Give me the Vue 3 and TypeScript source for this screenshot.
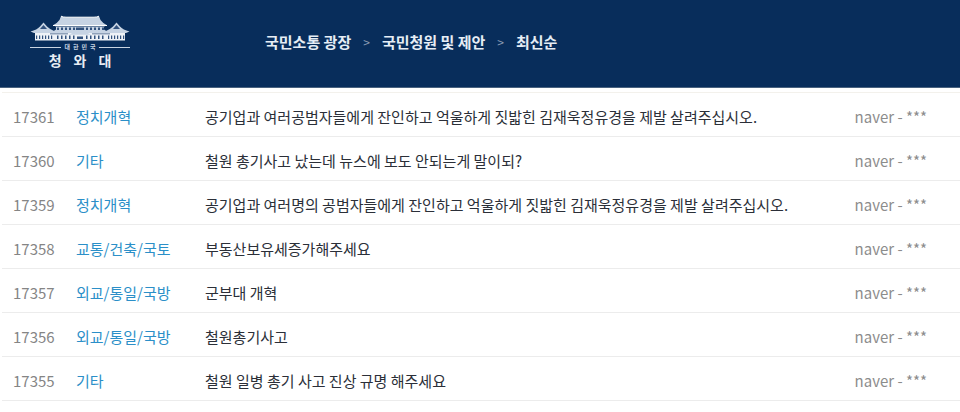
<script setup lang="ts">
interface Petition {
  id: number
  category: string
  title: string
  author: string
}

const trail: string[] = ['국민소통 광장', '국민청원 및 제안', '최신순']

const petitions: Petition[] = [
  { id: 17361, category: '정치개혁', title: '공기업과 여러공범자들에게 잔인하고 억울하게 짓밟힌 김재욱정유경을 제발 살려주십시오.', author: 'naver - ***' },
  { id: 17360, category: '기타', title: '철원 총기사고 났는데 뉴스에 보도 안되는게 말이되?', author: 'naver - ***' },
  { id: 17359, category: '정치개혁', title: '공기업과 여러명의 공범자들에게 잔인하고 억울하게 짓밟힌 김재욱정유경을 제발 살려주십시오.', author: 'naver - ***' },
  { id: 17358, category: '교통/건축/국토', title: '부동산보유세증가해주세요', author: 'naver - ***' },
  { id: 17357, category: '외교/통일/국방', title: '군부대 개혁', author: 'naver - ***' },
  { id: 17356, category: '외교/통일/국방', title: '철원총기사고', author: 'naver - ***' },
  { id: 17355, category: '기타', title: '철원 일병 총기 사고 진상 규명 해주세요', author: 'naver - ***' },
]

const country: string[] = [...'대한민국']
const house: string[] = [...'청와대']

const mainPillars: number[] = [27, 31, 35, 39, 43, 56, 60, 64, 68, 72]
const wingPillars: number[] = [6, 9, 12, 15, 18, 21, 78, 81, 84, 87, 90, 93]
</script>

<template>
  <div class="page">
    <header class="top">
      <a class="logo" href="#">
        <svg class="house" viewBox="0 0 100 27" aria-hidden="true">
          <!-- main hall roof -->
          <path class="roof" d="M31 1.2Q33 2.2 36 2.2H64Q67 2.2 69 1.2L70.5 5Q73 8.5 77 10.2L74 11.4H26L23 10.2Q27 8.5 29.5 5Z" />
          <path class="ridge" d="M31 1.2Q33 2.2 36 2.2H64Q67 2.2 69 1.2M23 10.5H77" />
          <!-- side pavilion roofs -->
          <path class="roof" d="M13.5 7.5L17 11.5Q20 14.5 25 16.5L23 18H4L0.5 16.5Q7 14.8 10 11.5Z" />
          <path class="roof" d="M86.5 7.5L83 11.5Q80 14.5 75 16.5L77 18H96L99.5 16.5Q93 14.8 90 11.5Z" />
          <path class="gable" d="M13.5 10L17 14H10ZM86.5 10L83 14H90Z" />
          <!-- walls and lower eaves -->
          <path class="roof" d="M26 12H74V14.5L80 18.5H20L26 14.5Z" />
          <path class="wall" d="M5 18H95V25.5H5Z" />
          <path class="roof" d="M39 19.8L43 17.5H57L61 19.8Z" />
          <rect v-for="x in mainPillars" :key="`u${x}`" class="dark" :x="x" y="12.5" width="2" height="2.5" />
          <rect v-for="x in mainPillars" :key="`l${x}`" class="dark" :x="x" y="20.5" width="1.5" height="3.5" />
          <rect v-for="x in wingPillars" :key="`w${x}`" class="dark" :x="x" y="20.5" width="1.2" height="3.5" />
          <path class="dark" d="M46 12.5H54V15H46ZM47 21.5H53V24H47ZM20 18.5H38V19.2H20ZM62 18.5H80V19.2H62Z" />
        </svg>
        <span class="country">
          <span v-for="c in country" :key="c">{{ c }}</span>
        </span>
        <span class="name">
          <span v-for="c in house" :key="c">{{ c }}</span>
        </span>
      </a>
      <nav class="trail">
        <template v-for="(label, i) in trail" :key="label">
          <span v-if="i > 0" class="arrow">&gt;</span>
          <a href="#">{{ label }}</a>
        </template>
      </nav>
    </header>

    <main class="list">
      <table>
        <tbody>
          <tr v-for="p in petitions" :key="p.id">
            <td class="id">{{ p.id }}</td>
            <td class="category">{{ p.category }}</td>
            <td class="title"><a href="#">{{ p.title }}</a></td>
            <td class="author">{{ p.author }}</td>
          </tr>
        </tbody>
      </table>
    </main>
  </div>
</template>

<style>
body {
  margin: 0;
  background: #fff;
}
</style>

<style scoped>
.page {
  font-family: "Noto Sans CJK KR", "Noto Sans", sans-serif;
  font-size: 15px;
  color: #2b2f38;
}

a {
  color: inherit;
  text-decoration: none;
}

.top {
  display: flex;
  align-items: flex-start;
  box-sizing: border-box;
  min-height: 88px;
  padding: 15px 30px 0;
  background: #082d5b;
  border-bottom: 1px solid #49627f;
}

.logo {
  display: flex;
  flex-direction: column;
  align-items: center;
  width: 100px;
  margin-right: 135px;
}

.house {
  display: block;
  width: 100%;
}

.roof {
  fill: #c6d3e3;
}

.ridge {
  fill: none;
  stroke: #fff;
  stroke-width: 1;
}

.wall {
  fill: #eef2f7;
}

.gable,
.dark {
  fill: #31517d;
}

.country {
  display: flex;
  align-items: center;
  gap: 3px;
  width: 100%;
  margin-top: 1px;
  font-size: 6px;
  font-weight: 700;
  line-height: 8px;
  color: #c9d4e2;
}

.country::before,
.country::after {
  content: "";
  flex: 1;
  height: 1px;
  background: #c9d4e2;
}

.name {
  display: flex;
  gap: 12px;
  margin-top: 1px;
  font-size: 14px;
  font-weight: 700;
  line-height: 16px;
  color: #e8edf4;
}

.trail {
  display: flex;
  align-items: center;
  gap: 12px;
  padding-top: 16px;
  font-size: 15px;
  font-weight: 700;
  line-height: 22px;
  color: #e6edf5;
}

.arrow {
  font-size: 12px;
  font-weight: 400;
  color: #8c9db5;
}

.list {
  padding: 4px 0 8px 2px;
}

table {
  width: 100%;
  table-layout: fixed;
  border-collapse: separate;
  border-spacing: 0;
  border-top: 1px solid #f3f1ec;
}

td {
  height: 44px;
  padding: 5px 0 0;
  box-sizing: border-box;
  border-bottom: 1px solid #ececec;
  line-height: 22px;
  white-space: nowrap;
}

.id {
  width: 74px;
  padding-left: 11px;
  color: #858585;
}

.category {
  width: 129px;
  color: #2b8fc8;
}

.author {
  width: 108px;
  padding-right: 33px;
  text-align: right;
  color: #8c8c8c;
}
</style>
